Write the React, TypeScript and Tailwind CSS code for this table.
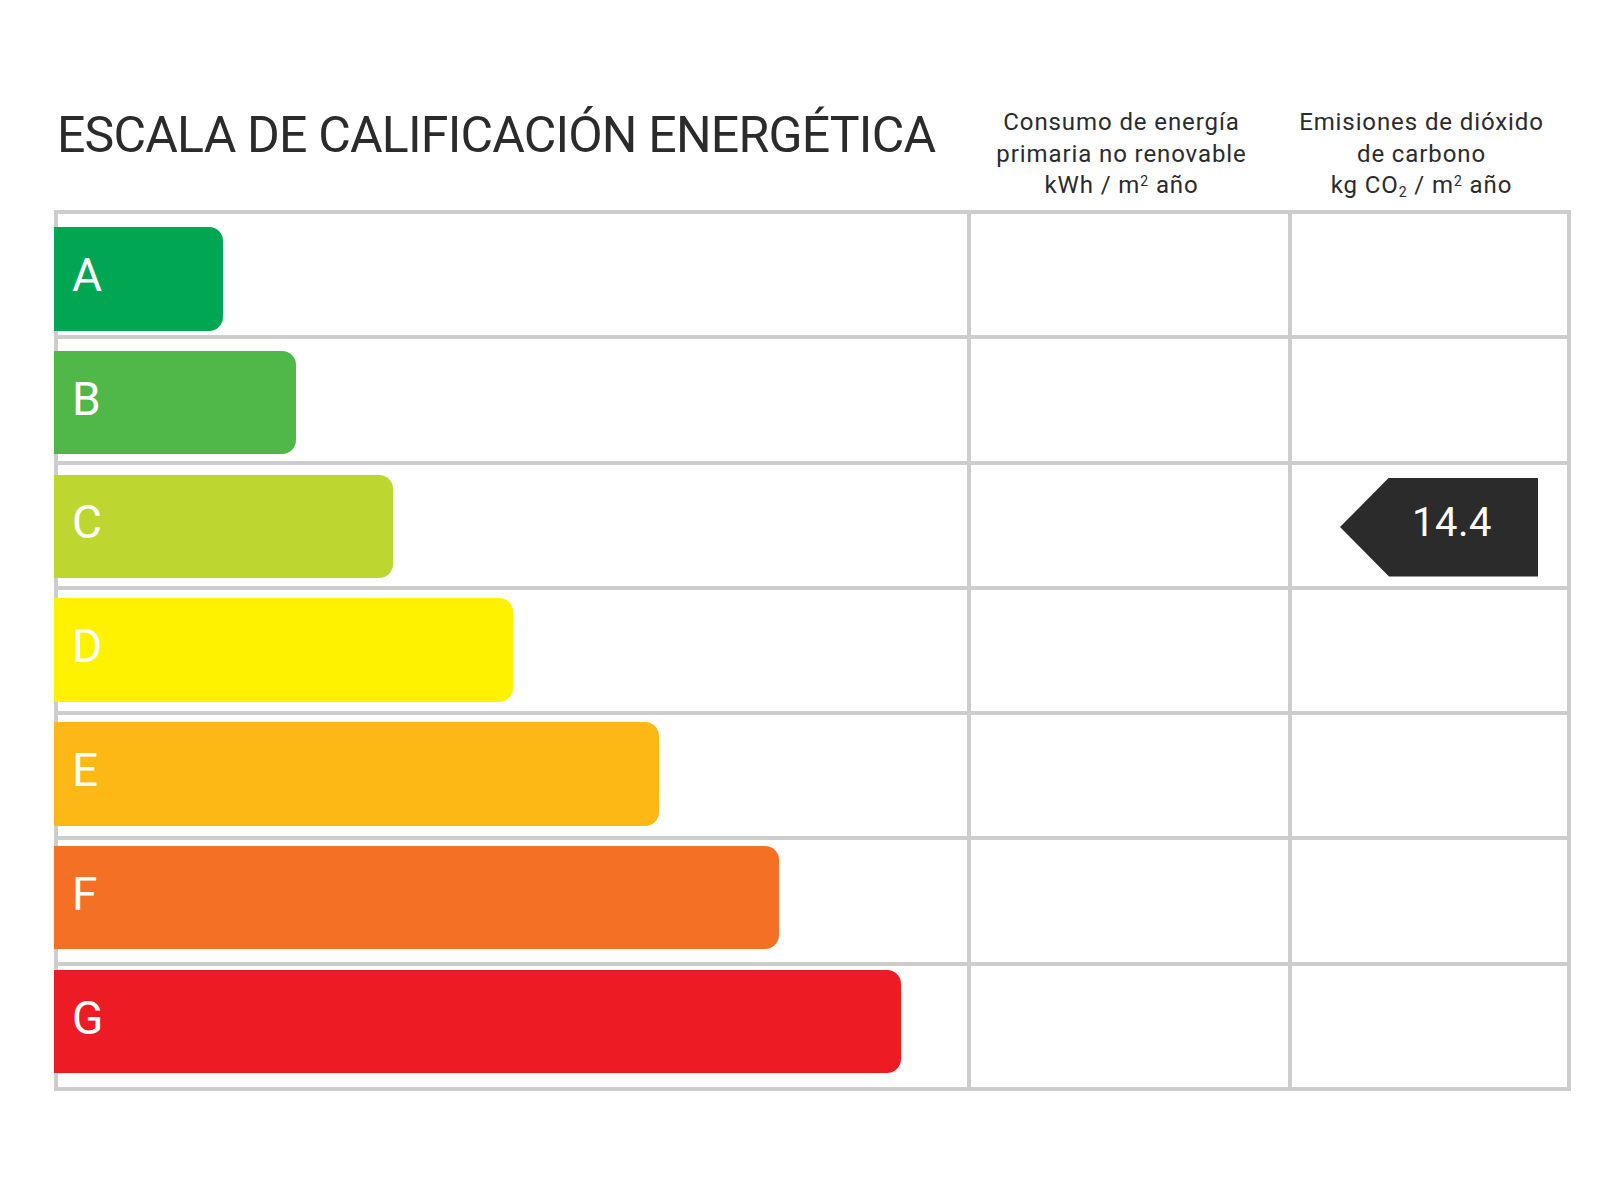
const bars = [
  { letter: "A", width: "w-[169px]", color: "bg-[#00a651]" },
  { letter: "B", width: "w-[242px]", color: "bg-[#4fb848]" },
  { letter: "C", width: "w-[339px]", color: "bg-[#bed730]" },
  { letter: "D", width: "w-[459px]", color: "bg-[#fff200]" },
  { letter: "E", width: "w-[605px]", color: "bg-[#fdb815]" },
  { letter: "F", width: "w-[725px]", color: "bg-[#f37024]" },
  { letter: "G", width: "w-[847px]", color: "bg-[#ed1c24]" },
];

const font = "font-['Roboto','Liberation_Sans',sans-serif]";

const App = () => {
  return (
    <div className={`w-[1600px] h-[1200px] bg-white text-[#2b2b2b] ${font}`}>
      <div className="pt-[100px] pl-[54px]">
        {/* Header */}
        <div className="flex h-[110px] items-start">
          <div className="w-[913px] pl-[3px] pt-[10px]">
            <h1 className="text-[50px] leading-none tracking-[-0.8px] whitespace-nowrap">
              ESCALA DE CALIFICACIÓN ENERGÉTICA
            </h1>
          </div>
          <div className="w-[321px] pt-[7px] pr-[12px] text-center text-[24px] leading-[31.5px] tracking-[0.9px] whitespace-nowrap">
            <p>Consumo de energía</p>
            <p>primaria no renovable</p>
            <p>
              kWh / m<sup className="text-[14px]">2</sup> año
            </p>
          </div>
          <div className="w-[283px] pt-[7px] pr-[16px] text-center text-[24px] leading-[31.5px] tracking-[0.9px] whitespace-nowrap">
            <p>Emisiones de dióxido</p>
            <p>de carbono</p>
            <p>
              kg CO<sub className="text-[14px]">2</sub> / m
              <sup className="text-[14px]">2</sup> año
            </p>
          </div>
        </div>

        {/* Grid */}
        <div className="relative w-[1517px] border-4 border-[#cdcdcd]">
          {bars.map((bar, i) => (
            <div
              key={bar.letter}
              className={`flex ${i > 0 ? "h-[125.3px] border-t-4 border-[#cdcdcd]" : "h-[121.3px]"}`}
            >
              <div className="w-[909px]" />
              <div className="w-[321px] border-l-4 border-[#cdcdcd]" />
              <div className="flex flex-1 items-start justify-end border-l-4 border-[#cdcdcd] pr-[29px] pt-[13px]">
                {bar.letter === "C" && (
                  <div className="flex h-[99px] w-[198px] items-center bg-[#2b2b2b] pl-[72px] pb-[8px] text-[40px] leading-none tracking-[0.5px] text-white [clip-path:polygon(49px_0,100%_0,100%_100%,49px_100%,0_50%)]">
                    14.4
                  </div>
                )}
              </div>
            </div>
          ))}

          {/* Rating bars */}
          <div className="absolute left-[-4px] top-[13px] flex flex-col gap-[20.3px]">
            {bars.map((bar) => (
              <div
                key={bar.letter}
                className={`flex h-[103.5px] items-center rounded-r-[14px] pl-[18px] pb-[8px] text-[46px] leading-none text-white ${bar.width} ${bar.color}`}
              >
                {bar.letter}
              </div>
            ))}
          </div>
        </div>
      </div>
    </div>
  );
};

export default App;
